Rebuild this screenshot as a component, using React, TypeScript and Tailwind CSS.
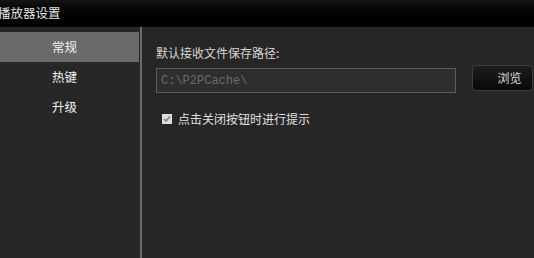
import React from "react";

const tabs = ["常规", "热键", "升级"];

const App = () => {
  return (
    <div
      className="w-[534px] h-[258px] overflow-hidden flex flex-col bg-[#272727] text-[12px] leading-none"
      style={{ fontFamily: '"Noto Sans CJK SC", "Liberation Sans", sans-serif' }}
    >
      {/* title bar */}
      <div className="h-[27px] shrink-0 flex items-center bg-gradient-to-b from-[#141414] to-[#000000] border-b border-[#050505]">
        <span className="ml-[-2px] text-[12.5px] text-[#e6e6e6]">播放器设置</span>
      </div>

      <div className="flex flex-1">
        {/* sidebar */}
        <div className="w-[140px] shrink-0 pt-[5px] bg-[#272727]">
          {tabs.map((t, i) => (
            <div
              key={t}
              className={
                "h-[30px] w-[139px] flex items-center pl-[52px] text-[12.5px] text-[#f2f2f2] " +
                (i === 0 ? "bg-[#6a6a6a]" : "")
              }
            >
              {t}
            </div>
          ))}
        </div>
        <div className="w-[2px] shrink-0 bg-[#6b6b6b]" />

        {/* content */}
        <div className="flex-1 pl-[14px] pt-[19px] bg-[#262626]">
          <div className="text-[#d6d6d6] h-[13px] flex items-center">默认接收文件保存路径:</div>
          <div className="flex items-start mt-[9px]">
            <div className="w-[300px] h-[25px] border border-[#5c5c5c] bg-[#2e2e2e] flex items-center pl-[4px]">
              <span
                className="text-[#6c6c6c] text-[12px]"
                style={{ fontFamily: '"Liberation Mono", monospace' }}
              >
                C:\P2PCache\
              </span>
            </div>
            <button className="ml-[16px] -mt-[3px] w-[61px] h-[26px] rounded-[3px] border border-[#3c3c3c] bg-gradient-to-b from-[#1e1e1e] to-[#080808] text-[#dcdcdc] text-[12px] flex items-center justify-center pl-[14px]">
              浏览
            </button>
          </div>
          <div className="flex items-center mt-[20px] ml-[6px]">
            <div className="w-[10px] h-[10px] bg-[#dedede] flex items-center justify-center">
              <svg width="8" height="8" viewBox="0 0 8 8">
                <path d="M1 4 L3 6 L7 1.5" stroke="#7a7a7a" strokeWidth="1.5" fill="none" />
              </svg>
            </div>
            <span className="ml-[6px] text-[#e0e0e0]">点击关闭按钮时进行提示</span>
          </div>
        </div>
      </div>
    </div>
  );
};

export default App;
